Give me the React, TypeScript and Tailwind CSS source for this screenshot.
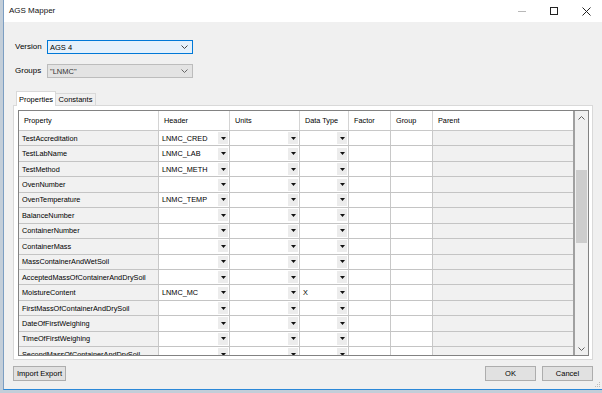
import React from 'react';

const rows: [string, string, string][] = [
  ['TestAccreditation', 'LNMC_CRED', ''],
  ['TestLabName', 'LNMC_LAB', ''],
  ['TestMethod', 'LNMC_METH', ''],
  ['OvenNumber', '', ''],
  ['OvenTemperature', 'LNMC_TEMP', ''],
  ['BalanceNumber', '', ''],
  ['ContainerNumber', '', ''],
  ['ContainerMass', '', ''],
  ['MassContainerAndWetSoil', '', ''],
  ['AcceptedMassOfContainerAndDrySoil', '', ''],
  ['MoistureContent', 'LNMC_MC', 'X'],
  ['FirstMassOfContainerAndDrySoil', '', ''],
  ['DateOfFirstWeighing', '', ''],
  ['TimeOfFirstWeighing', '', ''],
  ['SecondMassOfContainerAndDrySoil', '', ''],
];

const Tri = () => (
  <svg width="5" height="3" viewBox="0 0 5 3">
    <polygon points="0,0 5,0 2.5,3" fill="#111" />
  </svg>
);

const Chevron = ({ up = false, color = '#555' }: { up?: boolean; color?: string }) => (
  <svg width="7" height="4" viewBox="0 0 7 4">
    <polyline
      points={up ? '0.5,3.5 3.5,0.5 6.5,3.5' : '0.5,0.5 3.5,3.5 6.5,0.5'}
      fill="none"
      stroke={color}
      strokeWidth="1"
    />
  </svg>
);

const DropCell = ({ w, text }: { w: string; text?: string }) => (
  <div className={`${w} flex items-center border-r border-[#c8c8c8] bg-white pl-[3px]`}>
    <span className="flex-1 whitespace-nowrap">{text}</span>
    <div className="mr-[1px] flex h-[12px] w-[10px] items-center justify-center bg-[#ececec]">
      <Tri />
    </div>
  </div>
);

export default function App() {
  return (
    <div
      className="h-[393px] w-[602px] overflow-hidden bg-[#c3ced9] text-black"
      style={{ fontFamily: '"Liberation Sans", Arial, sans-serif' }}
    >
      <div className="ml-[3px] flex h-[390px] w-[599px] flex-col border-b border-l border-b-[#2b88d8] border-l-[#7c9ec2]">
        {/* Title bar */}
        <div className="flex h-[22px] items-center bg-white">
          <span className="pl-[5px] text-[8px] leading-[10px] text-[#111]">AGS Mapper</span>
          <div className="ml-auto flex h-full">
            <div className="flex w-[32px] items-center justify-center">
              <div className="h-px w-[8px] bg-[#b8b8b8]" />
            </div>
            <div className="flex w-[32px] items-center justify-center">
              <div className="h-[8px] w-[8px] border border-[#222]" />
            </div>
            <div className="flex w-[32px] items-center justify-center">
              <svg width="9" height="9" viewBox="0 0 9 9">
                <path d="M0.5 0.5 L8.5 8.5 M8.5 0.5 L0.5 8.5" stroke="#222" strokeWidth="1" />
              </svg>
            </div>
          </div>
        </div>

        {/* Body */}
        <div className="relative flex flex-1 flex-col bg-[#f0f0f0] pt-[18px]">
          <div className="flex h-[14px] items-center pl-[11px]">
            <span className="w-[32px] text-[8px] leading-[10px]">Version</span>
            <div className="flex h-[14px] w-[146px] items-center border border-[#0078d7] bg-[#e5f1fb] pl-[2px] pr-[4px]">
              <span className="flex-1 text-[7.5px] leading-[9px]">AGS 4</span>
              <Chevron color="#444" />
            </div>
          </div>
          <div className="mt-[10px] flex h-[14px] items-center pl-[11px]">
            <span className="w-[32px] text-[8px] leading-[10px]">Groups</span>
            <div className="flex h-[14px] w-[146px] items-center border border-[#bcbcbc] bg-[#e3e3e3] pl-[2px] pr-[4px]">
              <span className="flex-1 text-[7.5px] leading-[9px] text-[#333]">"LNMC"</span>
              <Chevron color="#666" />
            </div>
          </div>

          {/* Tabs */}
          <div className="mt-[13px] flex h-[14px] items-end pl-[12px] text-[7.5px] leading-[9px]">
            <div className="relative z-10 -mb-px flex h-[15px] w-[40px] items-center justify-center border border-b-0 border-[#d9d9d9] bg-white">
              Properties
            </div>
            <div className="flex h-[12px] w-[40px] items-center justify-center border border-b-0 border-l-0 border-[#d9d9d9] bg-[#f0f0f0]">
              Constants
            </div>
          </div>

          {/* Tab page */}
          <div className="ml-[9px] h-[255px] w-[580px] border border-[#d9d9d9] bg-white pl-[4px] pr-[3px] pt-[4px] pb-[3px]">
            <div className="flex h-[246px] w-[571px] border border-[#828282] text-[7.3px] leading-[9px]">
              <div className="flex w-[556px] flex-col overflow-hidden border-r-2 border-[#a0a0a0]">
                {/* Header */}
                <div className="flex h-[20px] shrink-0 border-b border-[#c8c8c8] bg-white">
                  <div className="flex w-[140px] items-center border-r border-[#d4d4d4] pl-[5px]">Property</div>
                  <div className="flex w-[71px] items-center border-r border-[#d4d4d4] pl-[5px]">Header</div>
                  <div className="flex w-[70px] items-center border-r border-[#d4d4d4] pl-[5px]">Units</div>
                  <div className="flex w-[49px] items-center border-r border-[#d4d4d4] pl-[5px]">Data Type</div>
                  <div className="flex w-[42px] items-center border-r border-[#d4d4d4] pl-[5px]">Factor</div>
                  <div className="flex w-[42px] items-center border-r border-[#d4d4d4] pl-[5px]">Group</div>
                  <div className="flex w-[140px] items-center pl-[5px]">Parent</div>
                </div>
                {/* Rows */}
                {rows.map(([prop, header, dt]) => (
                  <div key={prop} className="flex h-[15.44px] shrink-0 border-b border-[#c4c4c4]">
                    <div className="flex w-[140px] items-center border-r border-[#c8c8c8] bg-[#f1f1f1] pl-[3px] whitespace-nowrap">
                      {prop}
                    </div>
                    <DropCell w="w-[71px]" text={header} />
                    <DropCell w="w-[70px]" />
                    <DropCell w="w-[49px]" text={dt} />
                    <div className="w-[42px] border-r border-[#c8c8c8] bg-white" />
                    <div className="w-[42px] border-r border-[#c8c8c8] bg-white" />
                    <div className="w-[140px] bg-[#f1f1f1]" />
                  </div>
                ))}
              </div>
              {/* Scrollbar */}
              <div className="flex w-[13px] flex-col bg-[#f0f0f0]">
                <div className="flex h-[13px] items-center justify-center">
                  <Chevron up color="#606060" />
                </div>
                <div className="mx-[1px] mt-[46px] h-[73px] bg-[#cdcdcd]" />
                <div className="flex-1" />
                <div className="flex h-[13px] items-center justify-center">
                  <Chevron color="#606060" />
                </div>
              </div>
            </div>
          </div>

          {/* Buttons */}
          <div className="mt-[6px] flex h-[15px] px-[9px] text-[7.5px] leading-[9px]">
            <button className="flex h-[15px] w-[53px] items-center justify-center border border-[#adadad] bg-[#e1e1e1]">
              Import Export
            </button>
            <button className="ml-auto flex h-[15px] w-[51px] items-center justify-center border border-[#adadad] bg-[#e1e1e1]">
              OK
            </button>
            <button className="ml-[6px] flex h-[15px] w-[51px] items-center justify-center border border-[#adadad] bg-[#e1e1e1]">
              Cancel
            </button>
          </div>

          {/* Resize grip */}
          <svg className="absolute bottom-[1px] right-[1px]" width="6" height="6" viewBox="0 0 6 6">
            <rect x="4" y="0" width="1" height="1" fill="#bdbdbd" />
            <rect x="2" y="2" width="1" height="1" fill="#bdbdbd" />
            <rect x="4" y="2" width="1" height="1" fill="#bdbdbd" />
            <rect x="0" y="4" width="1" height="1" fill="#bdbdbd" />
            <rect x="2" y="4" width="1" height="1" fill="#bdbdbd" />
            <rect x="4" y="4" width="1" height="1" fill="#bdbdbd" />
          </svg>
        </div>
      </div>
    </div>
  );
}
